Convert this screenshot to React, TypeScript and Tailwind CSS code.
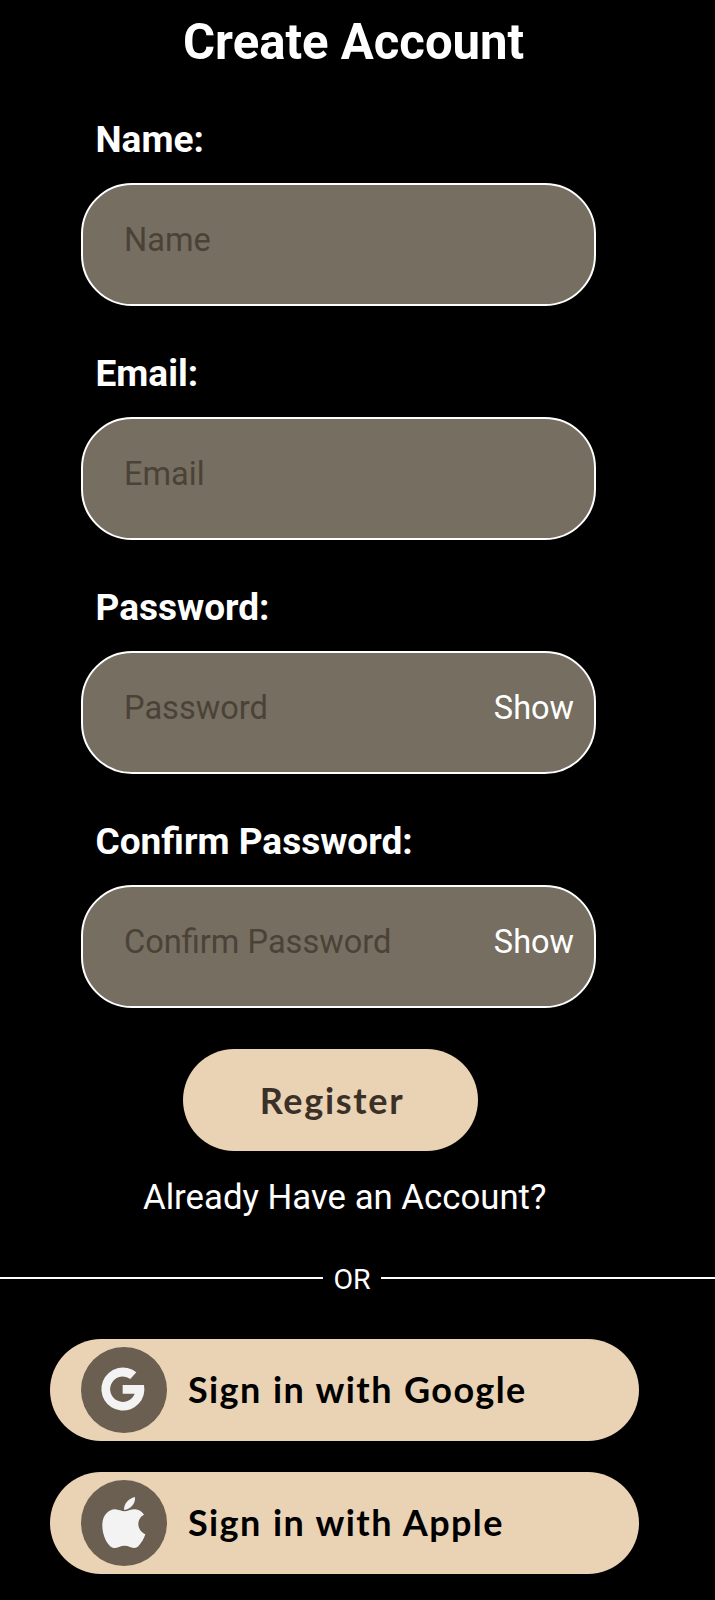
import { useState, type ReactNode } from "react";

type FieldProps = { label: string; placeholder: string; secret?: boolean };

function Field({ label, placeholder, secret = false }: FieldProps) {
  const [visible, setVisible] = useState(false);
  return (
    <label className="block h-[234px]">
      <span className="block pl-[14.5px] text-[37px] leading-[44px] font-bold">{label}</span>
      <span className="mt-[21px] flex h-[123px] w-[515px] items-start rounded-[51px] border-2 border-white bg-[#766e61] pt-[36px] pr-[20px] pl-[41px]">
        <input
          type={secret && !visible ? "password" : "text"}
          placeholder={placeholder}
          className="h-[38px] min-w-0 flex-1 bg-transparent text-[32.6px] leading-[38px] outline-none placeholder:text-[#4b4237]"
        />
        {secret && (
          <button type="button" onClick={() => setVisible(!visible)} className="text-[32.5px] leading-[38px]">
            {visible ? "Hide" : "Show"}
          </button>
        )}
      </span>
    </label>
  );
}

function GoogleIcon() {
  return (
    <svg viewBox="15 15 258 258" className="size-[86px]" fill="currentColor" aria-hidden="true">
      <path d="M181 91A64.5 64.5 0 1 0 204 129H140V155H176A38 38 0 1 1 163 111Z" />
    </svg>
  );
}

function AppleIcon() {
  return (
    <svg viewBox="15 15 258 258" className="size-[86px]" fill="currentColor" aria-hidden="true">
      <path d="M177 66C179 85 165 103 144 105C143 88 156 71 177 66Z" />
      <path d="M145 109C154 109 163 103 177 103C188 104 198 109 204 119C194 124 187 134 187 147C187 161 196 172 208 178C204 191 196 204 187 214C179 222 171 219 162 216C151 211 139 212 129 216C117 221 110 220 102 213C86 197 78 172 79 146C81 121 96 104 117 103C128 104 137 109 145 109Z" />
    </svg>
  );
}

function SocialButton({ icon, children }: { icon: ReactNode; children: ReactNode }) {
  return (
    <button
      type="button"
      className="flex h-[102px] w-[589px] items-center rounded-full bg-[#e9d3b4] pl-[31px] text-black"
    >
      <span className="flex size-[86px] items-center justify-center rounded-full bg-[#6a5f50] text-[#f3f3f3]">
        {icon}
      </span>
      <span className="ml-[21px] pb-[2px] font-[Lato,sans-serif] text-[36px] leading-[44px] font-bold tracking-[1.4px] [word-spacing:1px] whitespace-nowrap">
        {children}
      </span>
    </button>
  );
}

export default function App() {
  return (
    <main className="h-[1600px] w-[715px] overflow-hidden bg-black pt-[14px] font-[Roboto,sans-serif] text-white">
      <h1 className="pl-[183px] text-[49.1px] leading-[56px] font-bold whitespace-nowrap">Create Account</h1>
      <form className="mt-[48px] pl-[81px]">
        <Field label="Name:" placeholder="Name" />
        <Field label="Email:" placeholder="Email" />
        <Field label="Password:" placeholder="Password" secret />
        <Field label="Confirm Password:" placeholder="Confirm Password" secret />
        <button
          type="button"
          className="-mt-[5px] ml-[102px] block h-[102px] w-[295px] rounded-full bg-[#e9d3b4] pl-[3px] font-[Lato,sans-serif] text-[36px] leading-[44px] font-bold tracking-[1.7px] text-[#3b3028]"
        >
          Register
        </button>
      </form>
      <p className="mt-[26px] pl-[143px] text-[34.75px] leading-[40px] whitespace-nowrap">Already Have an Account?</p>
      <div className="mt-[43px] flex h-[36px] items-center">
        <span className="h-[2px] w-[323px] bg-white" />
        <span className="w-[58px] pt-[3px] text-center text-[28.5px] leading-[33px]">OR</span>
        <span className="h-[2px] flex-1 bg-white" />
      </div>
      <div className="mt-[43px] flex flex-col gap-[31px] pl-[50px]">
        <SocialButton icon={<GoogleIcon />}>Sign in with Google</SocialButton>
        <SocialButton icon={<AppleIcon />}>Sign in with Apple</SocialButton>
      </div>
    </main>
  );
}
